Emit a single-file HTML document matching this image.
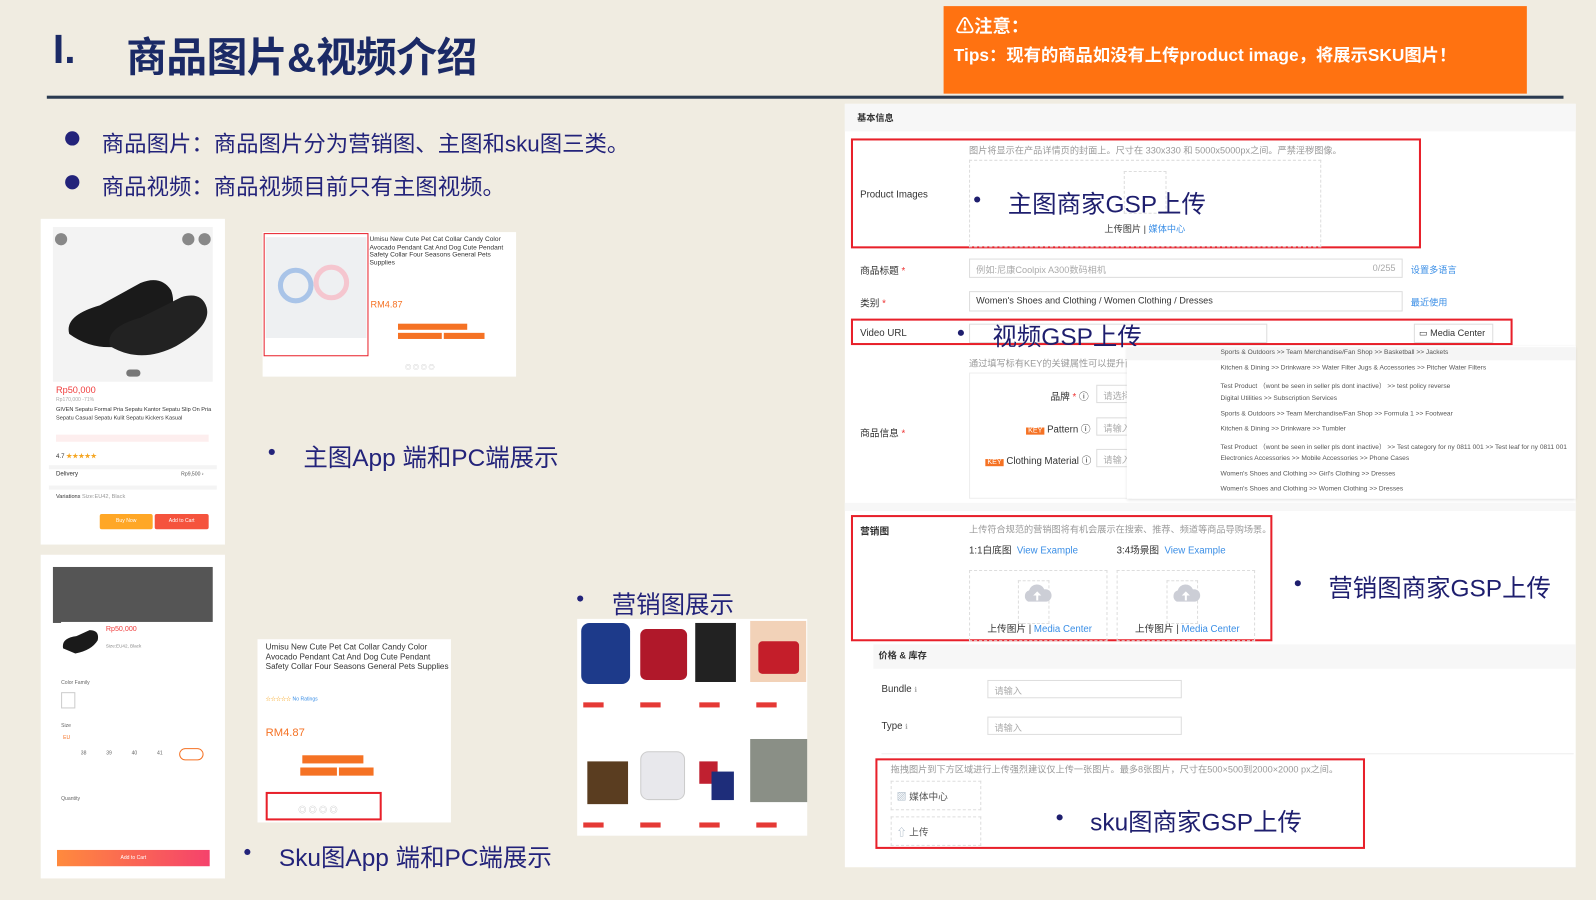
<!DOCTYPE html>
<html><head><meta charset="utf-8"><style>
*{margin:0;padding:0;box-sizing:border-box}
body{width:1596px;height:900px;background:#f0ece1;position:relative;overflow:hidden;font-family:"Liberation Sans","Noto Sans CJK SC",sans-serif}
#s{position:absolute;left:0;top:0;width:1568px;height:884px;transform:scale(1.0179);transform-origin:0 0}
.a{position:absolute;white-space:nowrap}
.w{position:absolute;background:#fff}
.navy{color:#23237a}
.red{position:absolute;border:2px solid #e8202a}
.g{color:#999;font-size:9px}
.lbl{font-size:9.5px;color:#333}
.inp{position:absolute;border:1px solid #ddd;background:#fff;font-size:9px;color:#aaa;padding:3px 6px;white-space:nowrap;overflow:hidden}
.blue{color:#3a8ee6}
.dash{position:absolute;border:1px dashed #ddd}
.dd{font-size:6.5px;color:#555;position:absolute;left:1199px;white-space:nowrap}
</style></head><body><div id="s">
<!-- title -->
<div class="a" style="left:52px;top:27px;font-size:40px;font-weight:bold;color:#1b2a66">I.</div>
<div class="a" style="left:124px;top:24px;font-size:40px;font-weight:bold;color:#1b2a66;letter-spacing:-0.5px">商品图片&amp;视频介绍</div>
<div class="a" style="left:46px;top:94px;width:1490px;height:3px;background:#2a3a50"></div>
<div class="a" style="left:927px;top:6px;width:573px;height:86px;background:#ff7211;color:#fff;font-weight:bold">
 <div class="a" style="left:12px;top:6px;font-size:18px">⚠注意：</div>
 <div class="a" style="left:10px;top:34px;font-size:17px">Tips：现有的商品如没有上传product image，将展示SKU图片！</div>
</div>
<div class="a" style="left:64px;top:129px;width:14px;height:14px;border-radius:50%;background:#23237a"></div>
<div class="a navy" style="left:100px;top:124px;font-size:22px">商品图片：商品图片分为营销图、主图和sku图三类。</div>
<div class="a" style="left:64px;top:172px;width:14px;height:14px;border-radius:50%;background:#23237a"></div>
<div class="a navy" style="left:100px;top:166px;font-size:22px">商品视频：商品视频目前只有主图视频。</div>

<!-- phone 1 -->
<div class="w" style="left:40px;top:215px;width:181px;height:320px">
 <div class="a" style="left:12px;top:8px;width:157px;height:152px;background:#f3f3f3"></div>
 <div class="a" style="left:14px;top:14px;width:12px;height:12px;border-radius:50%;background:#888"></div>
 <div class="a" style="left:139px;top:14px;width:12px;height:12px;border-radius:50%;background:#888"></div>
 <div class="a" style="left:155px;top:14px;width:12px;height:12px;border-radius:50%;background:#888"></div>
 <svg class="a" style="left:18px;top:35px" width="150" height="100"><path d="M10 78 Q5 60 40 50 L80 28 Q100 20 110 35 Q120 60 80 85 Q40 100 10 78Z" fill="#1a1a1a"/><path d="M50 90 Q45 72 80 62 L120 42 Q140 36 145 52 Q150 70 115 90 Q80 108 50 90Z" fill="#222"/></svg>
 <div class="a" style="left:84px;top:148px;width:14px;height:7px;border-radius:4px;background:#777"></div>
 <div class="a" style="left:15px;top:163px;font-size:9px;color:#f03c3c">Rp50,000</div>
 <div class="a" style="left:15px;top:175px;font-size:5px;color:#aaa">Rp170,000 -71%</div>
 <div class="a" style="left:15px;top:184px;font-size:5.5px;color:#333;line-height:8px;white-space:normal;width:155px">GIVEN Sepatu Formal Pria Sepatu Kantor Sepatu Slip On Pria Sepatu Casual Sepatu Kulit Sepatu Kickers Kasual</div>
 <div class="a" style="left:15px;top:212px;width:150px;height:7px;background:#fdeeee"></div>
 <div class="a" style="left:15px;top:228px;font-size:6px;color:#333">4.7 <span style="color:#f5a623">★★★★★</span></div>
 <div class="a" style="left:8px;top:242px;width:165px;height:4px;background:#f4f4f4"></div>
 <div class="a" style="left:15px;top:248px;font-size:6px;color:#333">Delivery</div>
 <div class="a" style="left:138px;top:248px;font-size:5px;color:#555">Rp9,500 ›</div>
 <div class="a" style="left:8px;top:262px;width:165px;height:4px;background:#f4f4f4"></div>
 <div class="a" style="left:15px;top:270px;font-size:5.5px;color:#333">Variations <span style="color:#999">Size:EU42, Black</span></div>
 <div class="a" style="left:58px;top:290px;width:52px;height:15px;background:#ffa726;border-radius:2px;font-size:5px;color:#fff;text-align:center;line-height:15px">Buy Now</div>
 <div class="a" style="left:112px;top:290px;width:53px;height:15px;background:#f5533d;border-radius:2px;font-size:5px;color:#fff;text-align:center;line-height:15px">Add to Cart</div>
</div>
<!-- pc 1 -->
<div class="w" style="left:258px;top:228px;width:249px;height:142px">
 <div class="a" style="left:3px;top:5px;width:99px;height:99px;background:#eef0f2"></div>
 <div class="a" style="left:15px;top:35px;width:35px;height:35px;border:5px solid #a9c4e8;border-radius:50%"></div>
 <div class="a" style="left:50px;top:32px;width:35px;height:35px;border:5px solid #f5c6cf;border-radius:50%"></div>
 <div class="red" style="left:1px;top:1px;width:103px;height:121px;border-width:1.5px"></div>
 <div class="a" style="left:105px;top:4px;font-size:6.5px;color:#333;line-height:7.5px;white-space:normal;width:140px">Umisu New Cute Pet Cat Collar Candy Color Avocado Pendant Cat And Dog Cute Pendant Safety Collar Four Seasons General Pets Supplies</div>
 <div class="a" style="left:106px;top:66px;font-size:9px;color:#f57224">RM4.87</div>
 <div class="a" style="left:133px;top:90px;width:68px;height:6px;background:#f57224"></div>
 <div class="a" style="left:133px;top:99px;width:43px;height:6px;background:#f57224"></div>
 <div class="a" style="left:178px;top:99px;width:40px;height:6px;background:#f57224"></div>
 <div class="a" style="left:140px;top:128px;font-size:6px;color:#bbb">◎ ◎ ◎ ◎</div>
</div>
<div class="a" style="left:264px;top:441px;width:6px;height:6px;border-radius:50%;background:#23237a"></div>
<div class="a navy" style="left:298px;top:430px;font-size:24px">主图App 端和PC端展示</div>

<!-- phone 2 -->
<div class="w" style="left:40px;top:545px;width:181px;height:318px">
 <div class="a" style="left:12px;top:12px;width:157px;height:55px;background:#555"></div>
 <div class="a" style="left:20px;top:66px;width:150px;height:60px;background:#fff"></div>
 <svg class="a" style="left:20px;top:70px" width="40" height="30"><path d="M2 22 Q0 12 15 10 L28 4 Q38 4 36 14 Q30 24 14 27Z" fill="#1a1a1a"/></svg>
 <div class="a" style="left:64px;top:70px;font-size:7px;color:#f03c3c">Rp50,000</div>
 <div class="a" style="left:64px;top:87px;font-size:4.5px;color:#888">Size:EU42, Black</div>
 <div class="a" style="left:20px;top:123px;font-size:5px;color:#666">Color Family</div>
 <div class="a" style="left:20px;top:135px;width:14px;height:16px;border:1px solid #ccc"></div>
 <div class="a" style="left:20px;top:165px;font-size:5px;color:#666">Size</div>
 <div class="a" style="left:22px;top:177px;font-size:5px;color:#f57224">EU</div>
 <div class="a" style="left:20px;top:192px;font-size:5px;color:#666;word-spacing:18px">&nbsp;38 39 40 41</div>
 <div class="a" style="left:136px;top:190px;width:24px;height:12px;border:1px solid #f57224;border-radius:6px"></div>
 <div class="a" style="left:20px;top:237px;font-size:5px;color:#666">Quantity</div>
 <div class="a" style="left:16px;top:290px;width:150px;height:16px;background:linear-gradient(90deg,#ff8a3d,#f5426c);font-size:5px;color:#fff;text-align:center;line-height:16px">Add to Cart</div>
</div>
<!-- pc 2 -->
<div class="w" style="left:253px;top:628px;width:190px;height:180px">
 <div class="a" style="left:8px;top:3px;font-size:8px;color:#333;line-height:9.5px;white-space:normal;width:180px">Umisu New Cute Pet Cat Collar Candy Color Avocado Pendant Cat And Dog Cute Pendant Safety Collar Four Seasons General Pets Supplies</div>
 <div class="a" style="left:8px;top:55px;font-size:5px;color:#f5a623">☆☆☆☆☆ <span class="blue">No Ratings</span></div>
 <div class="a" style="left:8px;top:86px;font-size:11px;color:#f57224">RM4.87</div>
 <div class="a" style="left:44px;top:114px;width:60px;height:8px;background:#f57224"></div>
 <div class="a" style="left:42px;top:126px;width:36px;height:8px;background:#f57224"></div>
 <div class="a" style="left:80px;top:126px;width:34px;height:8px;background:#f57224"></div>
 <div class="red" style="left:8px;top:150px;width:114px;height:28px"></div>
 <div class="a" style="left:40px;top:162px;font-size:8px;color:#bbb">◎ ◎ ◎ ◎</div>
</div>
<div class="a" style="left:240px;top:834px;width:6px;height:6px;border-radius:50%;background:#23237a"></div>
<div class="a navy" style="left:274px;top:823px;font-size:24px">Sku图App 端和PC端展示</div>

<!-- bags -->
<div class="a" style="left:567px;top:585px;width:6px;height:6px;border-radius:50%;background:#23237a"></div>
<div class="a navy" style="left:601px;top:574px;font-size:24px">营销图展示</div>
<div class="w" style="left:567px;top:608px;width:226px;height:213px">
 <div class="a" style="left:4px;top:4px;width:48px;height:60px;background:#1d3a8a;border-radius:8px"></div>
 <div class="a" style="left:62px;top:10px;width:46px;height:50px;background:#b0182a;border-radius:6px"></div>
 <div class="a" style="left:116px;top:4px;width:40px;height:58px;background:#222"></div>
 <div class="a" style="left:170px;top:2px;width:55px;height:60px;background:#f2d2b8"></div>
 <div class="a" style="left:178px;top:22px;width:40px;height:32px;background:#c41e2a;border-radius:4px"></div>
 <div class="a" style="left:10px;top:140px;width:40px;height:42px;background:#5a3d20"></div>
 <div class="a" style="left:62px;top:130px;width:44px;height:48px;background:#e8e8ec;border:1px solid #ccc;border-radius:8px"></div>
 <div class="a" style="left:120px;top:140px;width:18px;height:22px;background:#c02030"></div>
 <div class="a" style="left:132px;top:150px;width:22px;height:28px;background:#1e2d7a"></div>
 <div class="a" style="left:170px;top:118px;width:56px;height:62px;background:#8a8f86"></div>
 <div class="a" style="left:6px;top:82px;width:20px;height:5px;background:#e53935"></div>
 <div class="a" style="left:62px;top:82px;width:20px;height:5px;background:#e53935"></div>
 <div class="a" style="left:120px;top:82px;width:20px;height:5px;background:#e53935"></div>
 <div class="a" style="left:176px;top:82px;width:20px;height:5px;background:#e53935"></div>
 <div class="a" style="left:6px;top:200px;width:20px;height:5px;background:#e53935"></div>
 <div class="a" style="left:62px;top:200px;width:20px;height:5px;background:#e53935"></div>
 <div class="a" style="left:120px;top:200px;width:20px;height:5px;background:#e53935"></div>
 <div class="a" style="left:176px;top:200px;width:20px;height:5px;background:#e53935"></div>
</div>

<!-- right panel -->
<div class="w" style="left:830px;top:102px;width:718px;height:750px"></div>
<div class="a" style="left:830px;top:102px;width:718px;height:27px;background:#f7f7f7"></div>
<div class="a" style="left:842px;top:109px;font-size:9px;font-weight:bold;color:#333">基本信息</div>

<div class="red" style="left:836px;top:136px;width:560px;height:108px"></div>
<div class="a g" style="left:952px;top:141px">图片将显示在产品详情页的封面上。尺寸在 330x330 和 5000x5000px之间。严禁淫秽图像。</div>
<div class="dash" style="left:952px;top:157px;width:346px;height:86px"></div>
<div class="dash" style="left:1104px;top:168px;width:42px;height:42px"></div>
<div class="a lbl" style="left:845px;top:186px">Product Images</div>
<div class="a" style="left:957px;top:193px;width:6px;height:6px;border-radius:50%;background:#1e1e6e"></div>
<div class="a" style="left:990px;top:181px;font-size:24px;color:#1e1e6e">主图商家GSP上传</div>
<div class="a" style="left:1085px;top:218px;font-size:9px;color:#333">上传图片 | <span class="blue">媒体中心</span></div>

<div class="a lbl" style="left:845px;top:258px">商品标题 <span style="color:#e33">*</span></div>
<div class="inp" style="left:952px;top:254px;width:426px;height:19px">例如:尼康Coolpix A300数码相机<span style="float:right">0/255</span></div>
<div class="a blue" style="left:1386px;top:258px;font-size:9px">设置多语言</div>
<div class="a lbl" style="left:845px;top:290px">类别 <span style="color:#e33">*</span></div>
<div class="inp" style="left:952px;top:286px;width:426px;height:20px;color:#333">Women's Shoes and Clothing / Women Clothing / Dresses</div>
<div class="a blue" style="left:1386px;top:290px;font-size:9px">最近使用</div>

<div class="inp" style="left:952px;top:318px;width:293px;height:19px"></div>
<div class="inp" style="left:1389px;top:318px;width:78px;height:19px;color:#333;padding:3px 4px">▭ Media Center</div>
<div class="red" style="left:836px;top:313px;width:650px;height:26px"></div>
<div class="a lbl" style="left:845px;top:322px">Video URL</div>
<div class="a" style="left:941px;top:324px;width:6px;height:6px;border-radius:50%;background:#1e1e6e"></div>
<div class="a" style="left:975px;top:311px;font-size:24px;color:#1e1e6e">视频GSP上传</div>

<div class="a g" style="left:952px;top:350px">通过填写标有KEY的关键属性可以提升商品曝光。您填写的越多</div>
<div class="a" style="left:952px;top:366px;width:160px;height:124px;border:1px solid #eee;background:#fff"></div>
<div class="a lbl" style="left:845px;top:418px">商品信息 <span style="color:#e33">*</span></div>
<div class="a lbl" style="left:1032px;top:382px">品牌 <span style="color:#e33">*</span> ⓘ</div>
<div class="inp" style="left:1077px;top:378px;width:40px;height:18px">请选择</div>
<div class="a lbl" style="left:1008px;top:414px"><span style="background:#f57224;color:#fff;font-size:7px;padding:0 2px">KEY</span> Pattern ⓘ</div>
<div class="inp" style="left:1077px;top:410px;width:40px;height:18px">请输入或选择已存在的值</div>
<div class="a lbl" style="left:968px;top:445px"><span style="background:#f57224;color:#fff;font-size:7px;padding:0 2px">KEY</span> Clothing Material ⓘ</div>
<div class="inp" style="left:1077px;top:441px;width:40px;height:18px">请输入或选择已存在的值</div>
<div class="a" style="left:1107px;top:340px;width:441px;height:150px;background:#fff;box-shadow:0 1px 3px rgba(0,0,0,.12)"></div>
<div class="a" style="left:1107px;top:341px;width:441px;height:13px;background:#f5f5f5"></div>
<div class="dd" style="top:343px">Sports &amp; Outdoors &gt;&gt; Team Merchandise/Fan Shop &gt;&gt; Basketball &gt;&gt; Jackets</div>
<div class="dd" style="top:358px">Kitchen &amp; Dining &gt;&gt; Drinkware &gt;&gt; Water Filter Jugs &amp; Accessories &gt;&gt; Pitcher Water Filters</div>
<div class="dd" style="top:373px">Test Product （wont be seen in seller pls dont inactive） &gt;&gt; test policy reverse</div>
<div class="dd" style="top:388px">Digital Utilities &gt;&gt; Subscription Services</div>
<div class="dd" style="top:403px">Sports &amp; Outdoors &gt;&gt; Team Merchandise/Fan Shop &gt;&gt; Formula 1 &gt;&gt; Footwear</div>
<div class="dd" style="top:418px">Kitchen &amp; Dining &gt;&gt; Drinkware &gt;&gt; Tumbler</div>
<div class="dd" style="top:433px">Test Product （wont be seen in seller pls dont inactive） &gt;&gt; Test category for ny 0811 001 &gt;&gt; Test leaf for ny 0811 001</div>
<div class="dd" style="top:447px">Electronics Accessories &gt;&gt; Mobile Accessories &gt;&gt; Phone Cases</div>
<div class="dd" style="top:462px">Women's Shoes and Clothing &gt;&gt; Girl's Clothing &gt;&gt; Dresses</div>
<div class="dd" style="top:477px">Women's Shoes and Clothing &gt;&gt; Women Clothing &gt;&gt; Dresses</div>

<div class="a" style="left:830px;top:494px;width:718px;height:8px;background:#f7f7f7"></div>
<div class="red" style="left:836px;top:506px;width:414px;height:124px"></div>
<div class="a lbl" style="left:845px;top:514px;font-weight:bold">营销图</div>
<div class="a g" style="left:952px;top:513px">上传符合规范的营销图将有机会展示在搜索、推荐、频道等商品导购场景。</div>
<div class="a lbl" style="left:952px;top:533px">1:1白底图 &nbsp;<span class="blue">View Example</span></div>
<div class="a lbl" style="left:1097px;top:533px">3:4场景图 &nbsp;<span class="blue">View Example</span></div>
<div class="dash" style="left:952px;top:560px;width:136px;height:70px"></div>
<div class="dash" style="left:1097px;top:560px;width:136px;height:70px"></div>
<div class="dash" style="left:1000px;top:570px;width:31px;height:43px"></div>
<div class="dash" style="left:1146px;top:570px;width:31px;height:43px"></div>
<svg class="a" style="left:1004px;top:573px" width="30" height="20"><path d="M6 18 A6 6 0 0 1 7 7 A8 8 0 0 1 22 6 A6 6 0 0 1 24 18Z" fill="#ccced6"/><path d="M15 8 L11 12 H14 V17 H16 V12 H19Z" fill="#fff"/></svg>
<svg class="a" style="left:1150px;top:573px" width="30" height="20"><path d="M6 18 A6 6 0 0 1 7 7 A8 8 0 0 1 22 6 A6 6 0 0 1 24 18Z" fill="#ccced6"/><path d="M15 8 L11 12 H14 V17 H16 V12 H19Z" fill="#fff"/></svg>
<div class="a lbl" style="left:970px;top:610px">上传图片 | <span class="blue">Media Center</span></div>
<div class="a lbl" style="left:1115px;top:610px">上传图片 | <span class="blue">Media Center</span></div>
<div class="a" style="left:1272px;top:570px;width:6px;height:6px;border-radius:50%;background:#1e1e6e"></div>
<div class="a" style="left:1305px;top:558px;font-size:24px;color:#1e1e6e">营销图商家GSP上传</div>

<div class="a" style="left:858px;top:633px;width:690px;height:24px;background:#f7f7f7"></div>
<div class="a" style="left:863px;top:637px;font-size:9px;font-weight:bold;color:#333">价格 &amp; 库存</div>
<div class="a lbl" style="left:866px;top:672px">Bundle <span style="color:#aaa;font-size:7px">ℹ</span></div>
<div class="inp" style="left:970px;top:668px;width:191px;height:18px">请输入</div>
<div class="a lbl" style="left:866px;top:708px">Type <span style="color:#aaa;font-size:7px">ℹ</span></div>
<div class="inp" style="left:970px;top:704px;width:191px;height:18px">请输入</div>
<div class="a" style="left:866px;top:740px;width:680px;height:1px;background:#eee"></div>
<div class="red" style="left:860px;top:745px;width:481px;height:89px"></div>
<div class="a g" style="left:875px;top:749px">拖拽图片到下方区域进行上传强烈建议仅上传一张图片。最多8张图片，尺寸在500×500到2000×2000 px之间。</div>
<div class="dash" style="left:875px;top:767px;width:89px;height:29px"></div>
<div class="a lbl" style="left:881px;top:775px;color:#555"><span style="color:#9ab">▨</span> 媒体中心</div>
<div class="dash" style="left:875px;top:802px;width:89px;height:29px"></div>
<div class="a lbl" style="left:881px;top:810px;color:#555"><span style="color:#9ab">⇧</span> 上传</div>
<div class="a" style="left:1038px;top:800px;width:6px;height:6px;border-radius:50%;background:#1e1e6e"></div>
<div class="a" style="left:1071px;top:788px;font-size:24px;color:#1e1e6e">sku图商家GSP上传</div>
<div class="a" style="left:858px;top:852px;width:690px;height:1px;background:#eee"></div>
</div></body></html>
